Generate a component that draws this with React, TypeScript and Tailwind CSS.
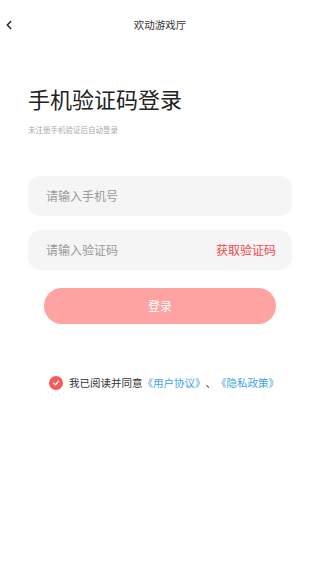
import { ChevronLeft } from "lucide-react";

const font = { fontFamily: '"Noto Sans CJK SC", "Noto Sans", sans-serif' };

export default function App() {
  return (
    <main className="min-h-screen w-[320px] bg-white text-[#222]" style={font}>
      <header className="relative flex h-[50px] items-center justify-center">
        <button className="absolute left-[2px] top-[18px] text-[#222]">
          <ChevronLeft size={14} strokeWidth={2.5} />
        </button>
        <h1 className="text-[10.5px] text-[#333]">欢动游戏厅</h1>
      </header>

      <section className="px-[28px] pt-[33px]">
        <h2 className="text-[22px] leading-[30px] text-[#222]">手机验证码登录</h2>
        <p className="mt-[12px] text-[7.5px] leading-[10px] text-[#aaa]">未注册手机验证后自动登录</p>

        <div className="mt-[41px] flex flex-col gap-[14px]">
          <div className="flex h-[40px] w-[264px] items-center rounded-[13px] bg-[#f5f5f5] px-[18px]">
            <input
              className="w-full bg-transparent text-[12px] text-[#333] outline-none placeholder:text-[#999]"
              placeholder="请输入手机号"
              style={font}
            />
          </div>
          <div className="flex h-[40px] w-[264px] items-center rounded-[13px] bg-[#f5f5f5] pl-[18px] pr-[16px]">
            <input
              className="min-w-0 flex-1 bg-transparent text-[12px] text-[#333] outline-none placeholder:text-[#999]"
              placeholder="请输入验证码"
              style={font}
            />
            <span className="text-[12px] text-[#f5454f]">获取验证码</span>
          </div>
        </div>

        <button className="mx-[16px] mt-[18px] flex h-[36px] w-[232px] items-center justify-center rounded-full bg-[#ffa2a2] text-[12px] text-white">
          登录
        </button>

        <div className="mt-[51px] flex items-center pl-[21px] text-[10.5px] text-[#333]">
          <span className="mr-[6px] flex h-[14px] w-[14px] items-center justify-center rounded-full bg-[#f45b5b]">
            <svg width="8" height="8" viewBox="0 0 10 10" fill="none">
              <path d="M2 5.2 L4.2 7.3 L8.2 2.8" stroke="white" strokeWidth="1.6" strokeLinecap="round" strokeLinejoin="round" />
            </svg>
          </span>
          <span>我已阅读并同意</span>
          <span className="text-[#3ea6df]">《用户协议》</span>
          <span>、</span>
          <span className="text-[#3ea6df]">《隐私政策》</span>
        </div>
      </section>
    </main>
  );
}
